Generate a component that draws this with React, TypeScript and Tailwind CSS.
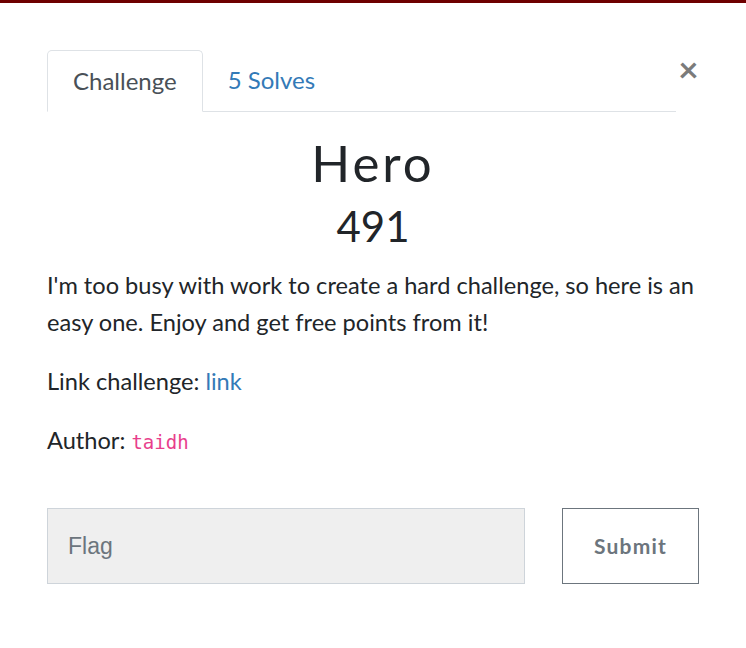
export default function App() {
  return (
    <div className="min-h-[648px] bg-white font-['Lato',sans-serif] text-[#212529]">
      <div className="h-[3px] bg-[#6e0000]" />
      <div className="px-[47px] pt-[47px]">
        <div className="flex items-start">
          <nav className="flex flex-1 border-b border-[#dee2e6]">
            <div className="-mb-px rounded-t-[5px] border border-[#dee2e6] border-b-white bg-white px-[25px] py-[15px] text-[24px] leading-[30px] text-[#495057]">
              Challenge
            </div>
            <div className="px-[25px] py-[15px] text-[24px] leading-[30px] text-[#337ab7]">
              5 Solves
            </div>
          </nav>
          <button className="ml-[2px] mt-[1px] w-[21px] text-center text-[35px] font-bold leading-[34px] text-[#7b7b7b]">
            ×
          </button>
        </div>

        <div className="text-center">
          <h2 className="mt-[21px] text-[51px] leading-[60px] tracking-[3px]">Hero</h2>
          <h3 className="mt-[7px] text-[42px] leading-[52px]">491</h3>
        </div>

        <div className="mt-[15px] text-[23.6px] leading-[37px]">
          <p>
            I'm too busy with work to create a hard challenge, so here is an easy one. Enjoy and get free
            points from it!
          </p>
          <p className="mt-[22px]">
            Link challenge: <a className="text-[#337ab7]">link</a>
          </p>
          <p className="mt-[22px]">
            Author: <code className="font-['DejaVu_Sans_Mono',monospace] text-[19px] text-[#e83e8c]">taidh</code>
          </p>
        </div>

        <div className="mt-[47px] flex items-center">
          <div className="flex h-[76px] w-[478px] items-center border border-[#ced4da] bg-[#efefef] px-[20px] font-['Liberation_Sans',sans-serif] text-[23px] text-[#6c757d]">
            Flag
          </div>
          <button className="ml-auto h-[76px] w-[137px] border border-[#6c757d] text-[21px] font-bold tracking-[1.2px] text-[#6c757d]">
            Submit
          </button>
        </div>
      </div>
    </div>
  )
}
